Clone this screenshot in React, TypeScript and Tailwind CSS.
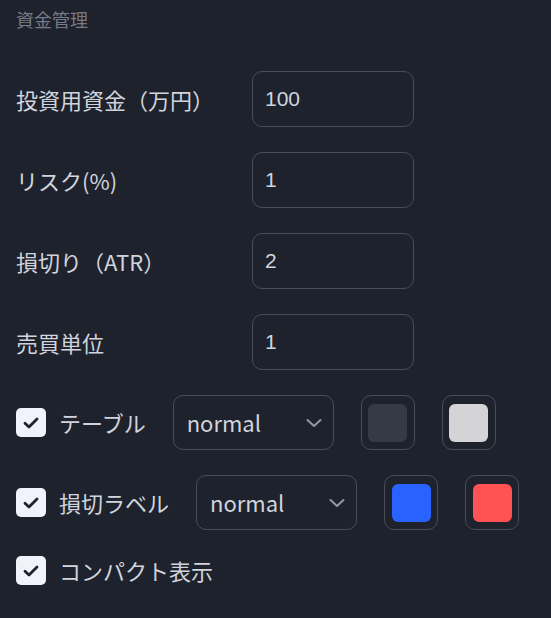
import React from "react";

const font = { fontFamily: '"Noto Sans CJK JP", "Noto Sans", sans-serif' };

function Check() {
  return (
    <div className="w-[30px] h-[29px] rounded-[5px] bg-[#f0f3fa] flex items-center justify-center shrink-0">
      <svg width="16" height="12" viewBox="0 0 16 12" fill="none">
        <path d="M2 6.2 L6 10 L14 2" stroke="#1e222d" strokeWidth="2.8" strokeLinecap="round" strokeLinejoin="round" />
      </svg>
    </div>
  );
}

function Select() {
  return (
    <div className="w-[161px] h-[55px] rounded-[10px] border border-[#4a4d57] flex items-center justify-between pl-[13px] pr-[11px] shrink-0">
      <span className="text-[22px] text-[#d1d4dc]">normal</span>
      <svg width="16" height="10" viewBox="0 0 16 10" fill="none">
        <path d="M1.5 2 L8 8 L14.5 2" stroke="#9598a1" strokeWidth="2" strokeLinecap="round" strokeLinejoin="round" />
      </svg>
    </div>
  );
}

function Swatch({ color }: { color: string }) {
  return (
    <div className="w-[54px] h-[55px] rounded-[10px] border border-[#4a4d57] flex items-center justify-center shrink-0">
      <div className="w-[39px] h-[38px] rounded-[6px]" style={{ backgroundColor: color }} />
    </div>
  );
}

function InputRow({ label, value }: { label: string; value: string }) {
  return (
    <div className="flex items-center">
      <div className="w-[236px] text-[22px] text-[#d1d4dc] leading-none">{label}</div>
      <div className="w-[162px] h-[56px] rounded-[10px] border border-[#4a4d57] flex items-center pl-[12px]">
        <span className="text-[21px] text-[#d1d4dc]" style={{ fontFamily: '"Liberation Sans", sans-serif' }}>
          {value}
        </span>
      </div>
    </div>
  );
}

export default function App() {
  return (
    <div className="w-[551px] h-[618px] bg-[#1e222d] pl-[16px] pt-[7px]" style={font}>
      <div className="text-[18px] leading-[24px] text-[#787b86]">資金管理</div>
      <div className="mt-[40px] flex flex-col gap-[25px]">
        <InputRow label="投資用資金（万円）" value="100" />
        <InputRow label="リスク(%)" value="1" />
        <InputRow label="損切り（ATR）" value="2" />
        <InputRow label="売買単位" value="1" />
        <div className="flex items-center gap-[27px]">
          <div className="flex items-center gap-[13px]">
            <Check />
            <span className="text-[22px] text-[#d1d4dc]">テーブル</span>
          </div>
          <Select />
          <Swatch color="#363a45" />
          <Swatch color="#d4d4d6" />
        </div>
        <div className="flex items-center gap-[27px]">
          <div className="flex items-center gap-[13px]">
            <Check />
            <span className="text-[22px] text-[#d1d4dc]">損切ラベル</span>
          </div>
          <Select />
          <Swatch color="#2962ff" />
          <Swatch color="#ff5252" />
        </div>
        <div className="flex items-center gap-[13px] -mt-[1px]">
          <Check />
          <span className="text-[22px] text-[#d1d4dc]">コンパクト表示</span>
        </div>
      </div>
    </div>
  );
}
